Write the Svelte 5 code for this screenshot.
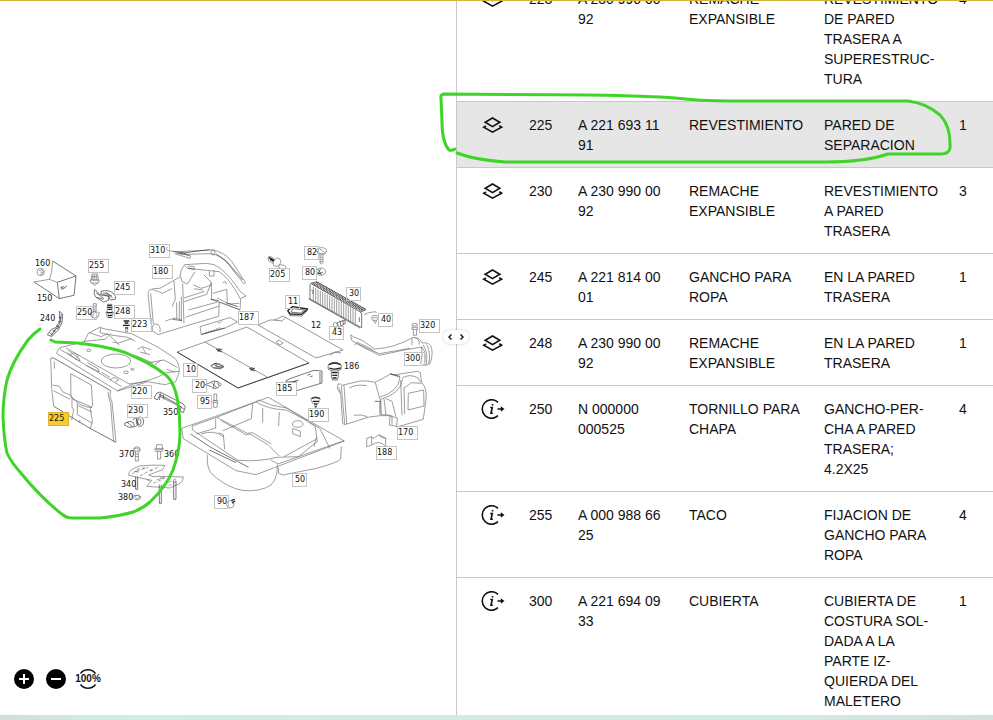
<script>
	import { onMount } from 'svelte'

	let list
	let selected = '225'

	const parts = [
		{ pos: '223', icon: 'layers', number: 'A 230 990 00 92', name: 'REMACHE EXPANSIBLE', note: 'REVESTIMIENTO DE PARED TRASERA A SUPERESTRUC\u00adTURA', qty: 4 },
		{ pos: '225', icon: 'layers', number: 'A 221 693 11 91', name: 'REVESTIMIENTO', note: 'PARED DE SEPARACION', qty: 1 },
		{ pos: '230', icon: 'layers', number: 'A 230 990 00 92', name: 'REMACHE EXPANSIBLE', note: 'REVESTIMIENTO A PARED TRASERA', qty: 3 },
		{ pos: '245', icon: 'layers', number: 'A 221 814 00 01', name: 'GANCHO PARA ROPA', note: 'EN LA PARED TRASERA', qty: 1 },
		{ pos: '248', icon: 'layers', number: 'A 230 990 00 92', name: 'REMACHE EXPANSIBLE', note: 'EN LA PARED TRASERA', qty: 1 },
		{ pos: '250', icon: 'info', number: 'N 000000 000525', name: 'TORNILLO PARA CHAPA', note: 'GANCHO-PER\u00adCHA A PARED TRASERA; 4.2X25', qty: 4 },
		{ pos: '255', icon: 'info', number: 'A 000 988 66 25', name: 'TACO', note: 'FIJACION DE GANCHO PARA ROPA', qty: 4 },
		{ pos: '300', icon: 'info', number: 'A 221 694 09 33', name: 'CUBIERTA', note: 'CUBIERTA DE COSTURA SOL\u00adDADA A LA PARTE IZ\u00adQUIERDA DEL MALETERO', qty: 1 }
	]

	// [number, x, baseline, has a frame]
	const labels = [
		['160', 35, 266, false], ['150', 37, 301, false], ['240', 40, 321, false],
		['255', 89, 268, true], ['245', 115, 290, true], ['250', 77, 315, true],
		['248', 115, 314, true], ['223', 132, 327, true], ['310', 150, 253, true],
		['180', 153, 274, true], ['205', 270, 277, true], ['187', 239, 320, true],
		['10', 186, 372, true], ['82', 307, 255, true], ['80', 305, 275, true],
		['30', 349, 296, true], ['11', 288, 304, true], ['12', 311, 328, false],
		['40', 381, 322, true], ['43', 332, 335, true], ['320', 420, 328, true],
		['300', 405, 361, true], ['186', 344, 369, false], ['220', 132, 394, true],
		['230', 128, 413, true], ['225', 49, 421, true], ['350', 163, 415, false],
		['370', 119, 457, false], ['360', 164, 457, false], ['340', 121, 487, false],
		['380', 118, 500, false], ['20', 195, 388, true], ['95', 200, 404, true],
		['185', 277, 391, true], ['190', 309, 417, true], ['170', 398, 435, true],
		['188', 377, 455, true], ['50', 295, 482, true], ['90', 217, 504, true]
	]

	// slats of the ventilation grille, part 30
	const slats = Array.from({ length: 19 }, (_, i) => 190 + i * 7)

	onMount(() => {
		list.scrollTop = 26
	})
</script>

<div class="page">
	<main>
		<section class="diagram">
			<svg class="drawing" viewBox="0 1 456 668" role="img" aria-label="Maletero">
				<!-- bin, clothes hook and small fixings -->
				<g class="ink" transform="translate(0 230) scale(0.3333)">
					<circle cx="122" cy="126" r="11" />
					<path d="M117 122l8-3 5 6-3 7-7 1M121 126l6 1" />
					<path class="dark" d="M158 93L228 138L222 196L178 206L172 157L228 138M102 156L178 206" />
					<path d="M158 93L155 126L148 148L102 156M148 148L172 157M186 178v-10" />
					<path class="dark" d="M181 174l9-4 4 3 7-5M184 178l10-4" />
					<path d="M276 132h17l2 18h-21zM270 150h28l-3 9h-22zM275 159l9 7 9-7M278 136v12M283 134v14M289 134v14M276 140h16" />
					<path class="dark" d="M283 180q-3 14 5 22l23 14 14-5 2-12-28-5-13-15zM288 188l24 18M303 184q22-6 36 5 12 12 7 19l-15 2-5-12-22-6zM310 188l26 10M290 202l20 6M318 186l20 18" />
					<path d="M280 221h9v25h-9zM281 228h8M281 234h8M281 240h8M272 248q12-8 26 0l-4 13q-10 8-20 0zM280 248l-2 14M288 247l3 15" />
					<path class="heavy" d="M322 226h14M321 232h16M324 238h12M320 248h18M323 256h13M325 262h9" />
					<path d="M322 223h14v23h4l-4 17h-14l-4-17h4z" />
					<path class="heavy" d="M371 273h17M374 279h11M369 286h20M376 294h8" />
					<path d="M377 290v15h6v-15" />
					<path class="dark" d="M178 244l10 8-2 26-11 22-20 20-13-6 13-16 12-5 13-20zM184 252l-5 30-22 30M176 262l10 2M175 274l10 2M169 287l9 4M158 300l9 6M148 307l10 9M152 318l14-20 12-6" />
				</g>

				<!-- side lining, tension strip and loading sill -->
				<g class="ink" transform="translate(140 230) scale(0.3333)">
					<path d="M83 51q-8 5 0 11l28 3 104-5q36 4 60 34l42 64-6 3-44-56q-22-28-52-34l-85 2-20-4 42 8-2 8-46-14" />
					<path class="dark" d="M100 65l28 3 18 8M120 70l88-11M228 72l30 20 50 58" />
					<ellipse cx="219" cy="67" rx="6" ry="8" />
					<path d="M28 180q14-6 32-5l42-24 18-10 4-22 10-15 66-4q24 0 42 16 30 24 58 68l18 14-16 7-2 35-62-24-2 43-92 27-90 28-18-12-10-92q-4-22 2-30z" />
					<path d="M134 107l8 8 96 10q34 24 62 80M122 140l4 14 16 8 23-37M128 160l4 120M102 152l4 56-10 22M38 178l30 12 28-14M32 190l8 92" />
					<path d="M132 215l68-22 14-36-22-22M214 157l1 52M218 190l42-12 2 38M215 208l84 31M232 204l34 18 32-2M160 165l24 10 32-10M162 176l26 4M132 204l62-20M136 262l102-34M145 240l88-24M118 214v54M110 217v48M124 200v74" />
					<path d="M36 302q0-22 12-20 15 2 12 25M76 273l28-9 22 6M208 124v14h14v-18M144 108l18 2 2 10M248 158l8-3 4 8" />
					<path class="dark" d="M98 268l28 4M212 208l24 4M258 218l36 12M145 114l16 4" />
					<path d="M180 290L262 265l10-2 20 13-36 18-72 20zM196 310l4-6M204 308l4-6M212 306l4-6M220 303l4-6M228 300l4-6M236 297l4-6M232 276l6 4 8-8" />
					<path class="dark" d="M184 313l70-19" />
					<path class="heavy" d="M386 82l18 10M390 88l14 8" />
					<path d="M384 82q6-6 12 0l10 7-6 12-14-8z" />
					<path class="solid" d="M410 84q14 0 12 14-6 14-20 10-8-12 8-24zM419 104l14 2q8 4 4 10l-8 2-14-6z" />
				</g>

				<!-- two-part load floor -->
				<g class="ink thin">
					<path d="M177 352L247 327L309 363L238 388ZM205 342L267 377M258 325L270 320L275 320L283 316L343 350L316 358ZM330 355l5-3 6 1M276 342l3-2 4 3-3 2zM274 320l8 1 4-4" />
					<path class="line" d="M177 352L238 388L309 363" />
					<path class="line" d="M216 349l6 3M217 351l5-2M219 348v4M249 368l6 3M250 370l5-2M252 367v4" />
					<path d="M211 366l5-3 4 1 4 3-4 2-6-1zM216 363l1 4 6 0" />
				</g>

				<!-- grille, sill cover and fixings on the right -->
				<g class="ink" transform="translate(250 230) scale(0.3333)">
					<ellipse cx="215" cy="62" rx="15" ry="9" />
					<path d="M200 63q4 12 14 12 12 0 16-12M208 56l14 10M210 74v25l4 3 5-4V74M210 82h8M210 89h8M210 95h8" />
					<ellipse cx="213" cy="125" rx="14" ry="11" />
					<path class="dark" d="M203 117l12 18M212 116l-8 16 16-6M202 128l10 4" />
					<path class="dark" d="M182 160l18-5 148 84-17 7zM330 246l5 4v43l-155-86V162M175 206l155 88" />
					<path class="coarse" d="M188 160L338 243M198 157L346 240" />
					{#each slats as x}
						<line x1={x} y1={166 + (x - 182) * 0.54} x2={x} y2={208 + (x - 182) * 0.54} />
					{/each}
					<path class="dark" d="M184 180l6 3-2 9M328 262v14" />
					<path class="heavy" d="M113 242l14-12 46 7-18 16-34-1z" />
					<path class="dark" d="M128 236l36 4-12 9-28-2zM115 248l6 9 34 1 18-17" />
					<path d="M342 254l14-6 20-3 4 4M364 262q2-6 12-6 10 0 10 7l-6 8h-12zM371 271l5 9 4-9M368 263h14" />
					<path class="dark" d="M262 278l22-8 2 10-20 12zM270 272l3 15M278 272l3 11" />
					<ellipse cx="256" cy="285" rx="6" ry="8" />
					<path d="M487 282q8-5 15 0v6h-15zM486 292h17v6h-17zM490 298v18h10v-18" />
					<path d="M302 314l8 6 28 12 36 25q56-2 114-34 18-4 28 16 18-3 26 8 10 22-2 54-10 8-26 4M302 314l3 17 40 24 44 21 74-16 53-9q16 20 6 57M314 346l4-6 70 31 92-16M486 324v22M494 324q14 0 14 20M320 336l50 24M514 350q6 24-2 52M520 345q16 26 8 60M530 344q14 26 6 58" />
					<path class="heavy" d="M236 404q18-10 36 0M238 414q16 7 34 0M246 428h17M247 436h15M248 444h12" />
					<path class="dark" d="M234 406q20-18 40 0l-1 12q-19 11-38 0zM244 424v16l4 10h14l3-10v-16" />
				</g>

				<!-- parcel shelf, partition lining and bracket -->
				<g class="ink" transform="translate(0 320) scale(0.3333)">
					<path d="M170 98l9-15 54-13 20-6 12-24 34-18 16 5 80 14 78 40 52 34q16 18 12 44l-10 26-32 9-52-9-90 28-182-112z" />
					<path d="M180 88L365 200M198 84L388 192M206 92l30 22 4 8-12-4-26-20M262 128l32 18 4 10-40-20M210 106l10-8 16 8-8 10M330 180l12-8 14 8-10 6M306 158l24 14M352 212l48-20q62-12 100-34l38-4M388 192l52-8" />
					<path d="M302 22l-2 16 24 6 60 8 22 12M268 38l36 12 20-10M252 64l64-6 16-18M330 48l24 22 40-14M338 66l12 2 8 8M412 88l16-8 26 10M420 96l30 8M428 82l10 20M448 128l44-8 40 22M464 134l20-14M500 148l24 8M410 108l50 22" />
					<ellipse cx="348" cy="123" rx="44" ry="21" />
					<ellipse cx="266" cy="91" rx="6" ry="4" /><ellipse cx="378" cy="157" rx="7" ry="4" /><ellipse cx="397" cy="148" rx="5" ry="3" />
					<path class="dark" d="M152 115q4-4 12 1l168 96M160 258l60 37 50 30 78 42" />
					<path d="M152 115l3 90 6 52M332 212l-2 18 6 16 6 60 6 60M324 215l2 16 6 20 4 54 5 60M213 234l-1-73 62 34 4 62-7 8 6 38-6 24M158 195l20 4 12 18 22 8 4 8v28l5 9-6 30M216 231q22 30 60 32M160 212l50 26M232 250v34l46 26M232 256l44 20M163 124v22M216 236l60 26M240 300l-2 8" />
					<path class="dark" d="M374 310l16-6 10 4 4 12-16 2-14-6zM398 300l10-7 6 20-8 8M380 306l18 14" />
					<ellipse class="dark" cx="420" cy="305" rx="11" ry="14" /><ellipse class="dark" cx="418" cy="305" rx="5" ry="9" />
					<path class="dark" d="M470 220l10-4 70 36 6 10-6 16-10-6 4-10-66-34-6 12-10-6zM476 222l60 32M490 224l2 14M540 258l12 10M482 220l-4 20" />
					<path d="M402 384q8-8 18 0v9h-18zM400 388l10-4 10 6M406 393v30h9v-30M406 402h9M406 410h9M470 374h16l2 12h-20zM464 386q12 8 26 0l-3 8h-20zM473 394v23h9v-23" />
					<path d="M386 466q-2-16 32-28 40-4 77-2l-7 13-42 16q12 8 28 4l76 2q0 16-12 20l-28 13-70-5 15-18q-38-8-69-15z" />
					<path class="dash" d="M396 462q20-14 48-18M420 468l40-22M450 454l28-14M410 448l34-6M460 490l36-16M490 494l40-18M470 480l24-8M506 498l24-16M440 478l14 8" />
					<path class="dark" d="M407 470v38h6v-38M403 454l12 2M478 494v56h6v-56M521 482v56h7v-56M480 474l8 1" />
					<path d="M397 532q5-13 26 0-8 16-26 0zM404 528l12-3 6 5-10 8z" />
				</g>

				<!-- spare wheel tub -->
				<g class="ink" transform="translate(170 350) scale(0.3333)">
					<path d="M35 235l102-36L295 142l228 131-265 101-60-12L40 266z" />
					<path d="M66 228l74-26 108-42 10-4q36 22 90 24 60 28 88 50l6 44-56 46-66 2q-54 14-116 9L68 240zM140 202q8 2 14 10l74 42 12-2 54 32 34 34M152 208l80 42 16-2 56 34M248 160l-4 46-86 36M278 174v44M328 186l-2 42M137 206v28l-58 18M146 248l14 6 4 44M94 252q38-14 66 8M342 320l96-52M258 156l8-6q40 20 84 24l100 62 30 60M302 330l22 12 198-70" />
					<path class="dark" d="M62 252l60 40 84 44 30 16M118 300l80 38" />
					<ellipse cx="383" cy="222" rx="16" ry="10" />
					<path d="M368 235l23 9v16l-23-9zM112 314q-2 40 12 56 30 30 72 46 46 14 90-2 38-12 36-70M325 352l1 18 12 5 102-20q66-18 72-28l2-38M432 290l8-30" />
					<path class="dark" d="M122 48l12-8 26 8-8 7-24-2M134 40l2 8 20 4" />
					<path class="dark" d="M106 104l14-6 10-5 14 2 10 8-10 10-14 3-6-6zM124 98l16 14M134 94l-4 20M142 98l6 10" />
					<path d="M132 132h8v20h-8zM129 152h14l-2 20h-10zM129 158h14" />
					<path class="dark" d="M348 92l12-6 72-25 24 2v36l-76 23M348 92l2 4 30-2M450 66v34M412 76l10-4M420 80l8-2M366 96l20-6" />
					<circle cx="181" cy="463" r="11" />
					<path class="heavy" d="M184 452l10-5M187 460l8-8" />
				</g>

				<!-- right side lining -->
				<g class="ink" transform="translate(300 350) scale(0.3333)">
					<path d="M126 106l54-13q24-2 46 4l46-25 10 3 30-5 40-6q10 0 10 8l2 24q18 20 14 50l-4 32-4 30-76 22-26-5 2-28q-26-2-62 4l-74 23-6-4-6-88-10-16 2-14q8-2 12 4" />
					<path d="M124 108l10 114M132 106l8 116M116 112l6 16M226 97l12 45q58-16 62-60l-28-10M242 148q62-18 66-62M306 84q24-14 48 0l8 12M302 90l4 106M312 110l2 82M238 142l4 8 2 44M252 146l6 50M258 146l18 8 12 46M314 114l20-16 30 2M325 130l46-10 1 48-48 12zM270 198l22 6-2 26M162 196q22-4 40 4M148 114q20-12 52-7M276 196v28M242 194l32 2" />
					<path class="dark" d="M270 71l30 8M224 154h20M240 156v38" />
					<path class="heavy" d="M34 146q12-7 26 0M38 154h19M42 162h10M44 170h6" />
					<path d="M32 148q14-14 29 0l-6 12H38zM43 162l4 14 4-14" />
					<path d="M200 265l15-5 4 6 18-12 20 10v26q-18-22-42-5l-15 5zM215 260v24M240 254v6l17 6" />
				</g>

				{#each labels as [text, x, y, framed]}
					{@const inset = text.length == 2 ? 2 : 0}
					{#if framed}
						<rect class="frame" class:marked={text == selected} x={x - inset - 0.5} y={y - 8.5} width={text.length == 2 ? 14 : 20} height="13" />
					{/if}
					<text {x} {y}>{text}</text>
				{/each}
			</svg>

			<div class="tools">
				<button aria-label="Ampliar">
					<svg viewBox="0 0 20 20"><circle cx="10" cy="10" r="10" /><path d="M10 5v10M5 10h10" /></svg>
				</button>
				<button aria-label="Reducir">
					<svg viewBox="0 0 20 20"><circle cx="10" cy="10" r="10" /><path d="M5 10h10" /></svg>
				</button>
				<button class="reset">
					<svg viewBox="0 0 20 20"><path d="M2.500 4.500A9.300 9.300 0 0 1 17.500 4.500M2.500 15.500A9.300 9.300 0 0 0 17.500 15.500" /></svg>
					<span>100%</span>
				</button>
			</div>
		</section>

		<section class="parts" bind:this={list}>
			<table>
				<colgroup>
					<col class="col-icon" />
					<col class="col-pos" />
					<col class="col-number" />
					<col />
					<col />
					<col class="col-qty" />
				</colgroup>
				<tbody>
					{#each parts as part}
						<tr class:selected={part.pos == selected}>
							<td class="icon">
								{#if part.icon == 'layers'}
									<svg viewBox="0 0 24 20">
										<path d="M11.500 3L18.800 7.300L11.500 11.600L4.200 7.300ZM5 11L2.800 12.200L11.500 17.200L20.600 12.200L18.200 10.800" />
									</svg>
								{:else}
									<svg viewBox="0 0 24 20">
										<path d="M17 3.300A9.300 9.300 0 1 0 17 16.700M16.500 10h4" />
										<path class="head" d="M19.800 7.200L23.500 10l-3.700 2.800z" />
										<path class="letter" d="M9.300 8.500h2L10 14.300h1.800M11.600 5v1.500" />
									</svg>
								{/if}
							</td>
							<td>{part.pos}</td>
							<td>{part.number}</td>
							<td>{part.name}</td>
							<td>{part.note}</td>
							<td>{part.qty}</td>
						</tr>
					{/each}
				</tbody>
			</table>
		</section>

		<button class="splitter" aria-label="Ajustar ancho">
			<svg viewBox="0 0 26 14"><path d="M8.500 4.500L6 7l2.500 2.500M17.500 4.500L20 7l-2.500 2.500" /></svg>
		</button>
	</main>
	<footer></footer>

	<!-- freehand pen marks over both panes -->
	<svg class="marks" viewBox="0 0 993 720" preserveAspectRatio="xMinYMin meet" aria-hidden="true">
		<path d="M40 329Q33 334 28 340Q12 362 7 380Q3 398 3 417Q4 440 7 453Q11 462 20 472Q42 499 63 515Q67 518 72 518L100 518Q120 516 133 512Q142 509 150 502Q166 487 173 470Q180 450 180 433Q180 417 178 403Q176 390 172 383Q169 377 163 373Q150 363 133 356Q125 352 117 350Q98 345 77 343L55 342L51 340" />
		<path d="M455 149Q452 151 449 150Q442 142 442 122L441 98Q440 95 444 94L590 95Q650 96 675 98Q700 101 730 101L908 101Q926 103 940 115Q951 126 950 148Q949 154 941 154L888 154Q865 162 825 162L640 162L505 162Q475 160 457 153" />
	</svg>
</div>

<style>
	:global(body) {
		margin: 0;
		background: #fff;
	}

	.page {
		display: flex;
		flex-direction: column;
		position: relative;
		box-sizing: border-box;
		height: 100vh;
		border-top: 1px solid #d3b640;
		color: #111;
		font-family: "Liberation Sans", Arial, sans-serif;
		font-size: 14px;
		line-height: 20px;
		overflow: hidden;
	}

	main {
		display: grid;
		grid-template-columns: 456fr 537fr;
		flex: 1;
		min-height: 0;
		position: relative;
	}

	footer {
		height: 5px;
		background: linear-gradient(90deg, #d3dcda, #d1ece8 10%, #d6e9e6 50%, #d1ebe6 76%, #d5dfdd);
	}

	button {
		background: none;
		border: none;
		color: inherit;
		cursor: pointer;
		font-family: inherit;
		padding: 0;
	}

	.diagram {
		display: flex;
		flex-direction: column;
		min-width: 0;
		min-height: 0;
	}

	.drawing {
		flex: 1;
		min-height: 0;
		width: 100%;
	}

	.drawing text {
		fill: #111;
		font-family: "DejaVu Sans", sans-serif;
		font-size: 8px;
	}

	.frame {
		fill: none;
		stroke: #c4c4c4;
		stroke-width: 1;
	}

	.frame.marked {
		fill: #f6cc2f;
		stroke: #dcb526;
	}

	.ink {
		fill: none;
		stroke: #6c6c6c;
		stroke-width: 2;
		stroke-linejoin: round;
	}

	.thin {
		stroke-width: 0.7;
	}

	.thin .line {
		stroke: #444;
		stroke-width: 1;
	}

	.dark {
		stroke: #333;
	}

	.heavy {
		stroke: #222;
		stroke-width: 4;
	}

	.solid {
		fill: #fff;
	}

	.coarse {
		stroke: #555;
		stroke-width: 8;
		stroke-dasharray: 3 2;
	}

	.dash {
		stroke-dasharray: 10 6;
	}

	.tools {
		display: flex;
		gap: 12px;
		padding: 0 14px 26px;
	}

	.tools button {
		display: grid;
		grid-template-columns: 20px;
		place-items: center;
		height: 20px;
		width: 20px;
	}

	.tools svg {
		display: block;
		grid-area: 1 / 1;
		height: 20px;
		width: 20px;
		overflow: visible;
	}

	.tools path {
		fill: none;
		stroke: #fff;
		stroke-width: 2;
	}

	.tools .reset path {
		stroke: #111;
		stroke-width: 1.5;
	}

	.reset span {
		grid-area: 1 / 1;
		font-size: 10px;
		font-weight: 700;
		line-height: 12px;
	}

	.parts {
		border-left: 1px solid #c8c8c8;
		min-width: 0;
		overflow-y: auto;
		scrollbar-width: none;
	}

	table {
		border-collapse: separate;
		border-spacing: 0;
		table-layout: fixed;
		width: 100%;
	}

	.col-icon {
		width: 60px;
	}

	.col-pos {
		width: 49px;
	}

	.col-number {
		width: 111px;
	}

	.col-qty {
		width: 46px;
	}

	td {
		border-top: 1px solid #c8c8c8;
		hyphens: manual;
		padding: 13px 8px 12px 12px;
		vertical-align: top;
	}

	.selected td {
		background: #e6e6e6;
	}

	.icon {
		padding-left: 24px;
	}

	.icon svg {
		display: block;
		fill: none;
		height: 20px;
		stroke: #111;
		stroke-width: 1.6;
		width: 24px;
	}

	.icon .head {
		fill: #111;
		stroke: none;
	}

	.splitter {
		position: absolute;
		left: calc(100% * 456 / 993);
		top: 336px;
		background: #fff;
		border-radius: 7px;
		box-shadow: 0 0 3px rgba(0, 0, 0, 0.2);
		height: 14px;
		transform: translate(-50%, -50%);
		width: 26px;
	}

	.splitter svg {
		display: block;
		fill: none;
		stroke: #222;
		stroke-width: 1.5;
	}

	.marks {
		position: absolute;
		left: 0;
		top: -1px;
		fill: none;
		pointer-events: none;
		stroke: #3fd428;
		stroke-linecap: round;
		stroke-linejoin: round;
		stroke-width: 3;
		width: 100%;
	}
</style>
